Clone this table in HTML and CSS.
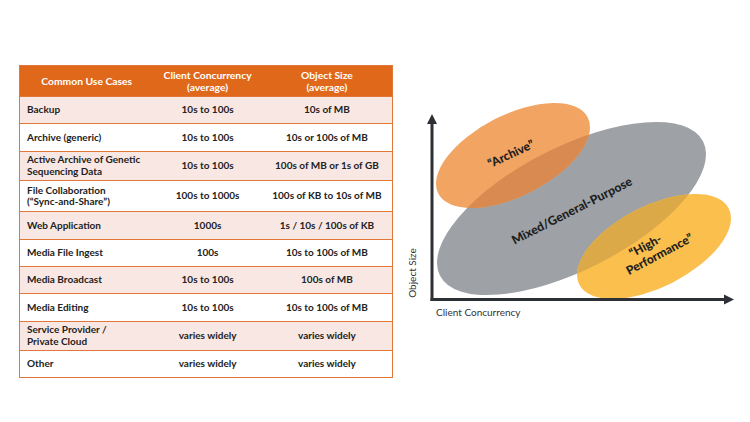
FILE: index.html
```html
<!DOCTYPE html>
<html>
<head>
<meta charset="utf-8">
<link rel="stylesheet" href="styles.css">
</head>
<body>
<div class="page">
  <table class="uses">
    <thead>
      <tr class="head">
        <th class="c1">Common Use Cases</th>
        <th class="c2">Client Concurrency<br>(average)</th>
        <th class="c3">Object Size<br>(average)</th>
      </tr>
    </thead>
    <tbody>
      <tr class="pink"><td>Backup</td><td>10s to 100s</td><td>10s of MB</td></tr>
      <tr><td>Archive (generic)</td><td>10s to 100s</td><td>10s or 100s of MB</td></tr>
      <tr class="pink tall"><td>Active Archive of Genetic<br>Sequencing Data</td><td>10s to 100s</td><td>100s of MB or 1s of GB</td></tr>
      <tr class="tall2"><td>File Collaboration<br>(“Sync-and-Share”)</td><td>100s to 1000s</td><td>100s of KB to 10s of MB</td></tr>
      <tr class="pink"><td>Web Application</td><td>1000s</td><td>1s / 10s / 100s of KB</td></tr>
      <tr><td>Media File Ingest</td><td>100s</td><td>10s to 100s of MB</td></tr>
      <tr class="pink"><td>Media Broadcast</td><td>10s to 100s</td><td>100s of MB</td></tr>
      <tr><td>Media Editing</td><td>10s to 100s</td><td>10s to 100s of MB</td></tr>
      <tr class="pink tall"><td>Service Provider /<br>Private Cloud</td><td>varies widely</td><td>varies widely</td></tr>
      <tr><td>Other</td><td>varies widely</td><td>varies widely</td></tr>
    </tbody>
  </table>

  <svg class="chart" width="345" height="240" viewBox="400 90 345 240" xmlns="http://www.w3.org/2000/svg">
    <defs>
      <clipPath id="clipGray">
        <ellipse cx="571.5" cy="208.5" rx="147.7" ry="61.4" transform="rotate(-27 571.5 208.5)"/>
      </clipPath>
    </defs>
    <ellipse cx="571.5" cy="208.5" rx="147.7" ry="61.4" transform="rotate(-27 571.5 208.5)" fill="#9ea2a7"/>
    <ellipse cx="513" cy="155.5" rx="83.9" ry="40.6" transform="rotate(-27 513 155.5)" fill="#f2a462"/>
    <ellipse cx="654" cy="246.5" rx="83.9" ry="40.6" transform="rotate(-27 654 246.5)" fill="#fbbf4e"/>
    <g clip-path="url(#clipGray)">
      <ellipse cx="513" cy="155.5" rx="83.9" ry="40.6" transform="rotate(-27 513 155.5)" fill="#d98a50"/>
      <ellipse cx="654" cy="246.5" rx="83.9" ry="40.6" transform="rotate(-27 654 246.5)" fill="#dba947"/>
    </g>

    <line x1="432" y1="301" x2="432" y2="122" stroke="#2d3136" stroke-width="3"/>
    <polygon points="432,114 427,124 437,124" fill="#2d3136"/>
    <line x1="430.5" y1="299.5" x2="726" y2="299.5" stroke="#2d3136" stroke-width="3"/>
    <polygon points="734,299.5 724,294.5 724,304.5" fill="#2d3136"/>

    <text class="lbl" x="511" y="158" transform="rotate(-25 511 154)">“Archive”</text>
    <text class="lbl big" x="572" y="215" transform="rotate(-27 572 211)">Mixed/General-Purpose</text>
    <text class="lbl" transform="rotate(-28 655 250)">
      <tspan x="650" y="246">“High-</tspan>
      <tspan x="657" y="260">Performance”</tspan>
    </text>
    <text class="axis" x="416" y="273" transform="rotate(-90 416 273)">Object Size</text>
    <text class="axis start" x="436" y="316">Client Concurrency</text>
  </svg>
</div>
</body>
</html>
```

FILE: styles.css
```css
html, body {
  margin: 0;
  padding: 0;
  background: #ffffff;
}

.page {
  display: flex;
  align-items: flex-start;
  gap: 7px;
  padding: 65px 0 0 19px;
  font-family: Lato, "Liberation Sans", sans-serif;
}

.uses {
  width: 374px;
  border-collapse: collapse;
  border: 1.5px solid #e2773a;
  font-size: 10px;
  font-weight: 700;
  color: #222222;
  line-height: 11.5px;
}

.uses th {
  background: #e0681b;
  color: #ffffff;
  font-size: 10.3px;
  font-weight: 700;
  height: 30px;
  padding: 0;
  text-align: center;
  line-height: 12px;
}

.uses .c1 { width: 134px; }
.uses .c2 { width: 109px; }
.uses .c3 { width: 131px; }

.uses td {
  height: 27.3px;
  padding: 0;
  text-align: center;
  border-top: 1.5px solid #e2773a;
  box-sizing: border-box;
}

.uses td:first-child {
  text-align: left;
  padding-left: 7px;
}

.uses tr.tall td { height: 29.4px; }
.uses tr.tall2 td { height: 31.5px; }

.uses tr.pink td {
  background: #f9e7e3;
}

.chart {
  margin-top: 25px;
  display: block;
}

.lbl {
  font-family: Lato, "Liberation Sans", sans-serif;
  font-weight: 900;
  font-size: 12px;
  fill: #1e1e1e;
  text-anchor: middle;
}

.lbl.big {
  font-size: 12.3px;
}

.axis {
  font-family: Lato, "Liberation Sans", sans-serif;
  font-size: 10px;
  fill: #333333;
  text-anchor: middle;
}

.axis.start {
  text-anchor: start;
}
```
